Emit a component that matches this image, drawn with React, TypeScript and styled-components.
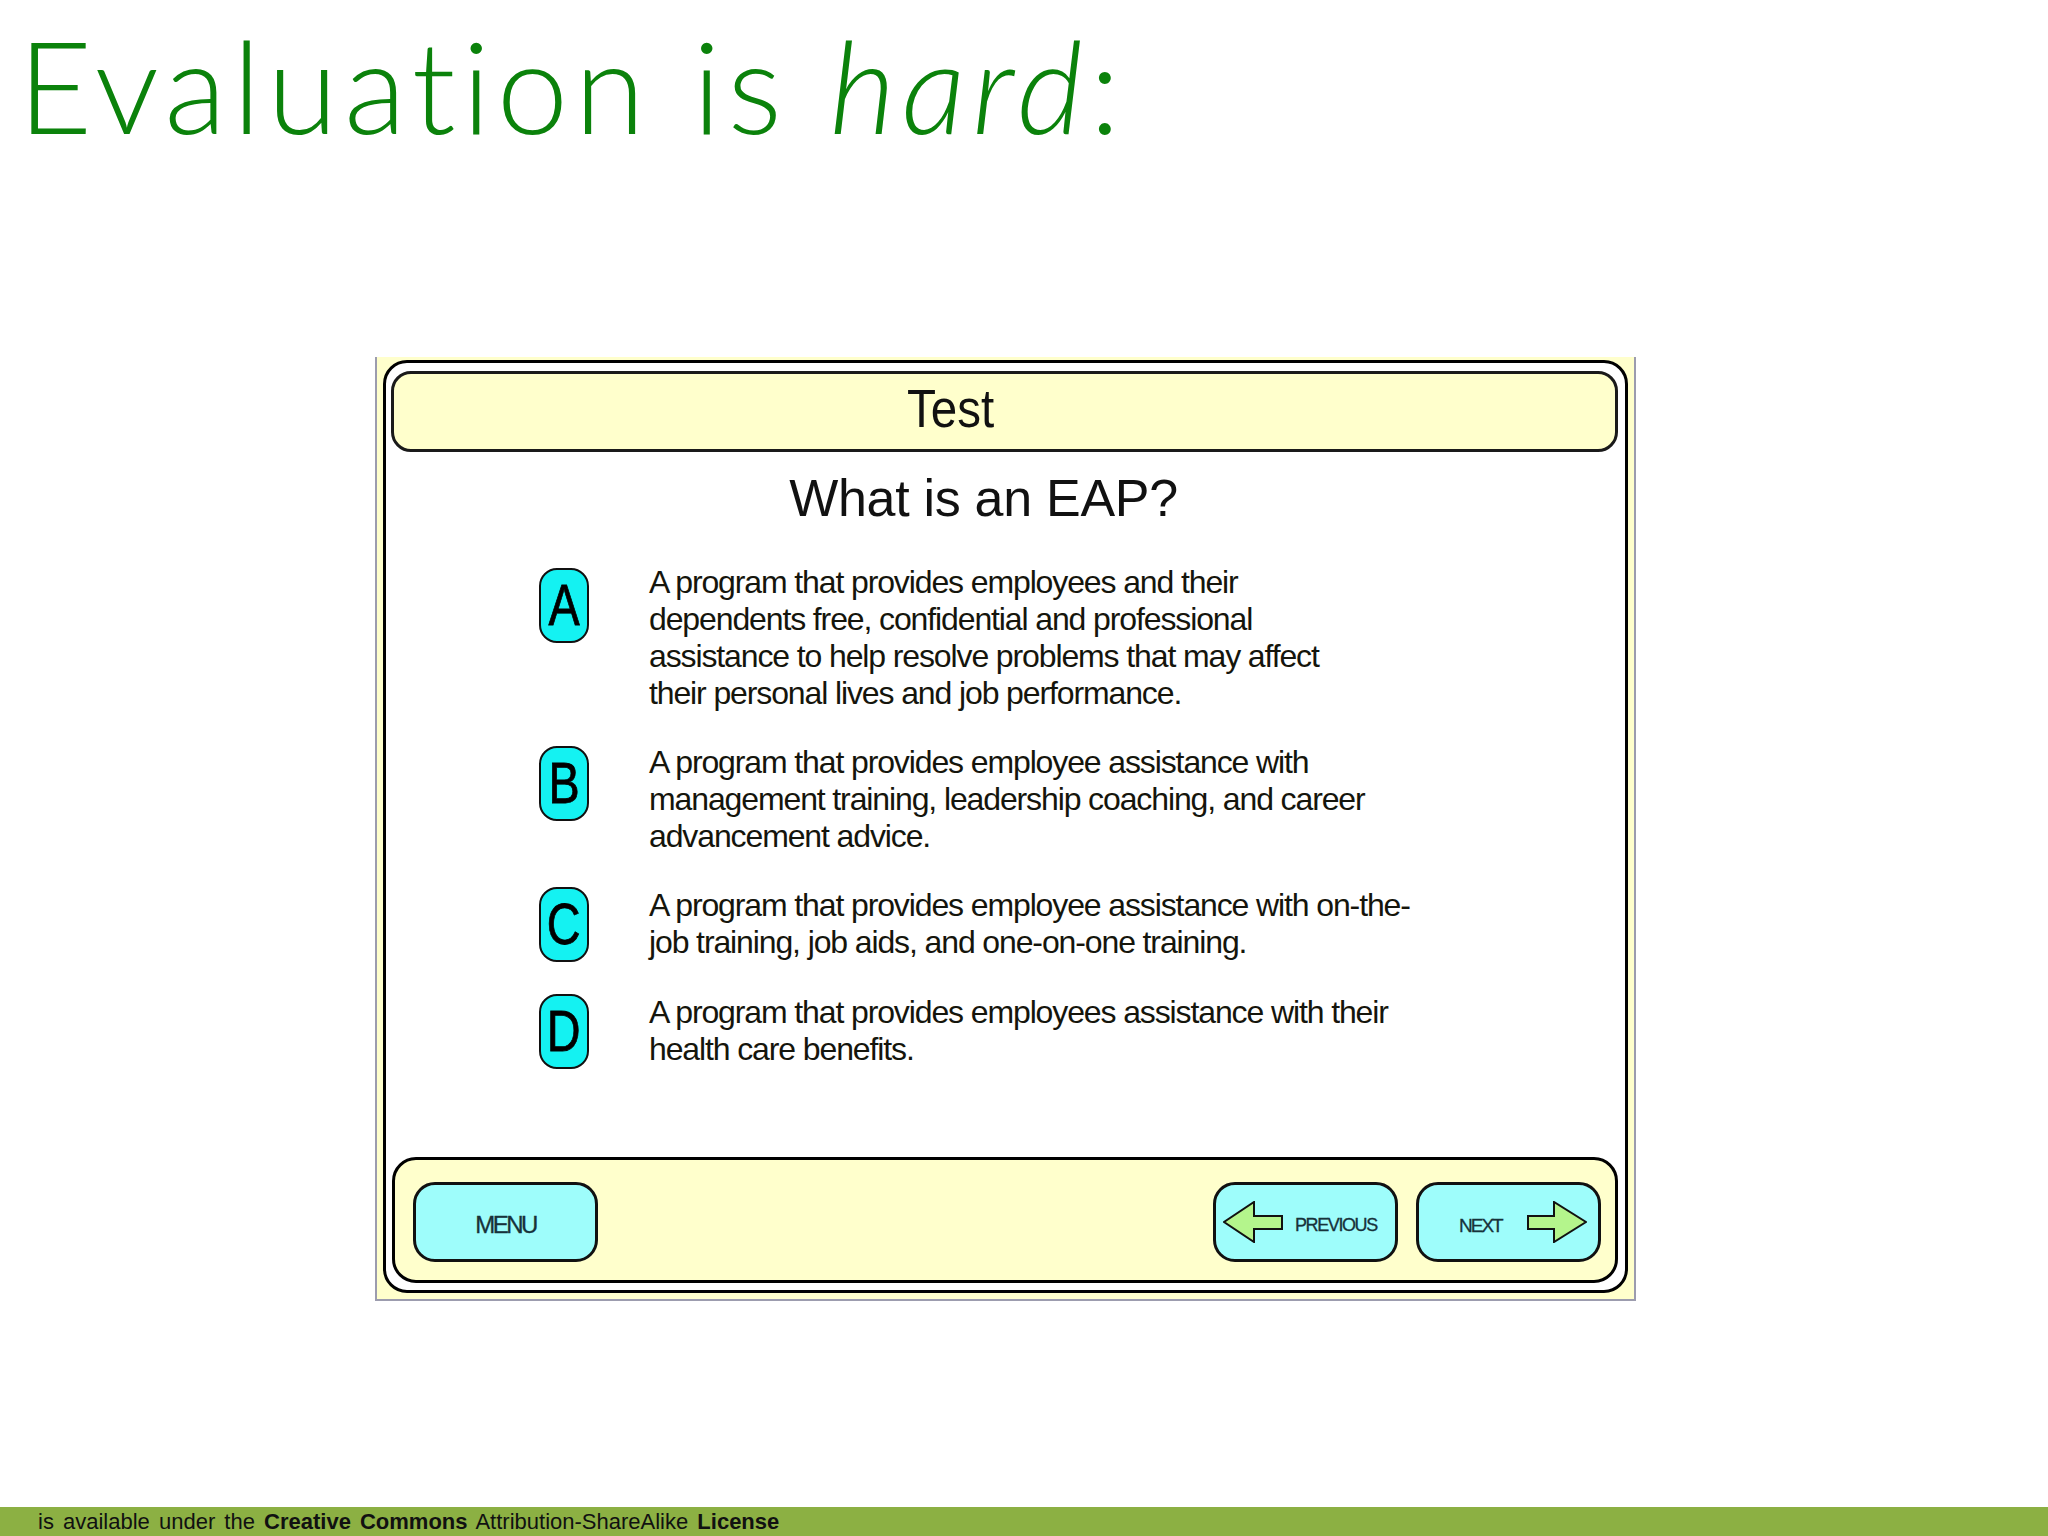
import React from 'react';

import styled, { createGlobalStyle } from 'styled-components';

const GlobalStyle = createGlobalStyle`
  html,
  body {
    margin: 0;
    padding: 0;
    background: #ffffff;
  }

  #root {
    min-height: 100vh;
  }
`;

const Page = styled.div`
  display: flex;
  flex-direction: column;
  min-height: 100vh;
  font-family: 'Liberation Sans', Arial, sans-serif;
`;

const Title = styled.h1`
  margin: 0;
  padding: 21px 0 0 18px;
  font-family: Lato, 'Liberation Sans', sans-serif;
  font-weight: 300;
  font-size: 128px;
  line-height: 128px;
  letter-spacing: 6.4px;
  color: #0b820b;

  em {
    font-style: italic;
  }
`;

const Slide = styled.div`
  margin: 208px 0 0 375px;
  width: 1261px;
  height: 944px;
  box-sizing: border-box;
  display: flex;
  padding: 3px 6px 6px 6px;
  background: #ffffcc;
  border: 2px solid #9c9cae;
  border-top: none;
`;

const Frame = styled.div`
  flex: 1;
  display: flex;
  flex-direction: column;
  padding: 8px 7px 7px 5px;
  background: #ffffff;
  border: 3px solid #000000;
  border-radius: 24px;
`;

const Header = styled.div`
  height: 81px;
  box-sizing: border-box;
  display: flex;
  align-items: center;
  justify-content: center;
  padding: 0 108px 7px 0;
  background: #ffffcc;
  border: 3px solid #1a1a1a;
  border-radius: 20px;
`;

const HeaderText = styled.span`
  display: inline-block;
  font-size: 54px;
  color: #111111;
  transform: scaleX(0.88);
`;

const Question = styled.div`
  margin-top: 16px;
  padding-right: 42px;
  text-align: center;
  font-size: 52px;
  line-height: 60px;
  letter-spacing: -0.3px;
  color: #111111;
`;

const Options = styled.div`
  display: flex;
  flex-direction: column;
  gap: 32px;
  margin-top: 36px;
  padding-left: 148px;
`;

const OptionRow = styled.div`
  display: flex;
  align-items: flex-start;
  gap: 60px;
`;

const Pill = styled.div<{ $offset: number }>`
  flex: none;
  width: 50px;
  height: 75px;
  box-sizing: border-box;
  margin-top: ${(p) => p.$offset}px;
  display: flex;
  align-items: center;
  justify-content: center;
  background: #14f2f2;
  border: 2px solid #111111;
  border-radius: 18px;
`;

const PillLetter = styled.span`
  display: inline-block;
  font-size: 57px;
  line-height: 1;
  color: #000000;
  transform: scaleX(0.82);
  -webkit-text-stroke: 0.8px #000000;
`;

const OptionText = styled.div`
  font-size: 32px;
  line-height: 37px;
  letter-spacing: -1.12px;
  color: #15150c;
  white-space: nowrap;
`;

const Footer = styled.div`
  margin-top: auto;
  margin-left: 1px;
  height: 126px;
  box-sizing: border-box;
  display: flex;
  align-items: center;
  gap: 18px;
  padding: 4px 14px 0 18px;
  background: #ffffcc;
  border: 3px solid #000000;
  border-radius: 24px;
`;

const NavButton = styled.div<{ $justify: string; $pad: number; $push?: boolean }>`
  width: 185px;
  height: 80px;
  box-sizing: border-box;
  display: flex;
  align-items: center;
  justify-content: ${(p) => p.$justify};
  padding-left: ${(p) => p.$pad}px;
  margin-left: ${(p) => (p.$push ? 'auto' : '0')};
  background: #9efdfb;
  border: 3px solid #111111;
  border-radius: 22px;
`;

const NavLabel = styled.span<{ $size: number; $spacing: number }>`
  padding-top: 6px;
  font-size: ${(p) => p.$size}px;
  letter-spacing: ${(p) => p.$spacing}px;
  color: #17323a;
  line-height: 1;
  -webkit-text-stroke: 0.3px #17323a;
`;

const ArrowSvg = styled.svg`
  flex: none;
  display: block;
`;

const LicenseBar = styled.div`
  margin-top: auto;
  height: 29px;
  padding-left: 38px;
  background: #8cb043;
  font-size: 22px;
  line-height: 29px;
  word-spacing: 3px;
  color: #111111;
  white-space: nowrap;

  b {
    font-weight: bold;
  }
`;

type Choice = {
  letter: string;
  offset: number;
  lines: string[];
};

const choices: Choice[] = [
  {
    letter: 'A',
    offset: 4,
    lines: [
      'A program that provides employees and their',
      'dependents free, confidential and professional',
      'assistance to help resolve problems that may affect',
      'their personal lives and job performance.',
    ],
  },
  {
    letter: 'B',
    offset: 2,
    lines: [
      'A program that provides employee assistance with',
      'management training, leadership coaching, and career',
      'advancement advice.',
    ],
  },
  {
    letter: 'C',
    offset: 0,
    lines: [
      'A program that provides employee assistance with on-the-',
      'job training, job aids, and one-on-one training.',
    ],
  },
  {
    letter: 'D',
    offset: 0,
    lines: [
      'A program that provides employees assistance with their',
      'health care benefits.',
    ],
  },
];

const Arrow = ({ dir }: { dir: 'left' | 'right' }) => {
  const right = '1,15 27,15 27,1 59,21 27,41 27,28 1,28';
  const left = '59,15 31,15 31,1 1,21 31,41 31,28 59,28';
  return (
    <ArrowSvg width='60' height='42' viewBox='0 0 60 42'>
      <polygon
        points={dir === 'right' ? right : left}
        fill='#b4f58c'
        stroke='#111111'
        strokeWidth='2'
        strokeLinejoin='miter'
      />
    </ArrowSvg>
  );
};

const App = () => {
  return (
    <Page>
      <GlobalStyle />
      <Title>
        Evaluation is <em>hard</em>:
      </Title>
      <Slide>
        <Frame>
          <Header>
            <HeaderText>Test</HeaderText>
          </Header>
          <Question>What is an EAP?</Question>
          <Options>
            {choices.map((choice) => (
              <OptionRow key={choice.letter}>
                <Pill $offset={choice.offset}>
                  <PillLetter>{choice.letter}</PillLetter>
                </Pill>
                <OptionText>
                  {choice.lines.map((line) => (
                    <div key={line}>{line}</div>
                  ))}
                </OptionText>
              </OptionRow>
            ))}
          </Options>
          <Footer>
            <NavButton $justify='center' $pad={0}>
              <NavLabel $size={24} $spacing={-2.5}>
                MENU
              </NavLabel>
            </NavButton>
            <NavButton $justify='flex-start' $pad={7} $push>
              <Arrow dir='left' />
              <NavLabel $size={18} $spacing={-1.4} style={{ marginLeft: 12 }}>
                PREVIOUS
              </NavLabel>
            </NavButton>
            <NavButton $justify='flex-start' $pad={40}>
              <NavLabel $size={19} $spacing={-2} style={{ marginRight: 25 }}>
                NEXT
              </NavLabel>
              <Arrow dir='right' />
            </NavButton>
          </Footer>
        </Frame>
      </Slide>
      <LicenseBar>
        is available under the <b>Creative Commons</b> Attribution-ShareAlike{' '}
        <b>License</b>
      </LicenseBar>
    </Page>
  );
};

export default App;
